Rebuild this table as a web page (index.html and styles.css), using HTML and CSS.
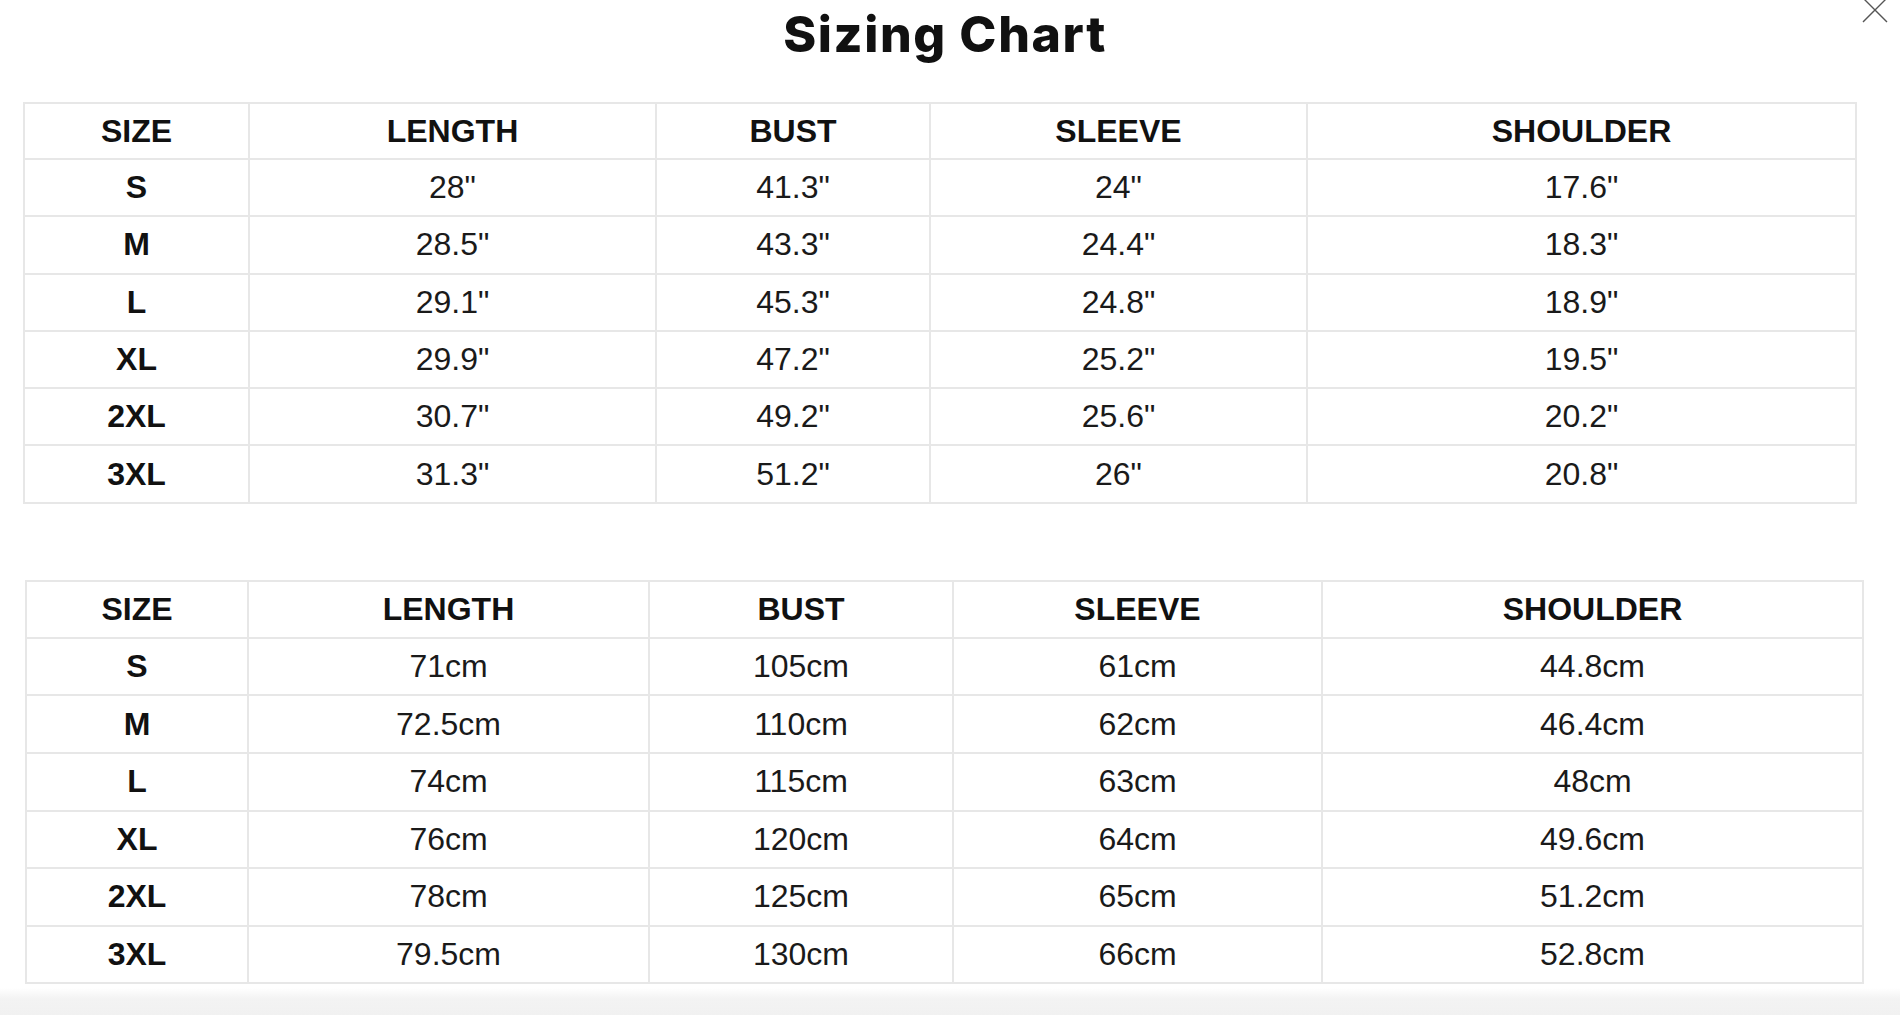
FILE: index.html
```html
<!DOCTYPE html>
<html lang="en">
<head>
<meta charset="utf-8">
<title>Sizing Chart</title>
<link rel="stylesheet" href="styles.css">
</head>
<body>
<div class="modal">
  <button class="close" aria-label="Close">
    <svg width="26" height="26" viewBox="0 0 26 26"><path d="M1 0 L25 24 M25 0 L1 24" stroke="#555" stroke-width="1.4" fill="none"/></svg>
  </button>
  <h1 class="title">Sizing Chart</h1>

  <table class="chart chart-in">
    <colgroup>
      <col class="c1"><col class="c2"><col class="c3"><col class="c4"><col class="c5">
    </colgroup>
    <thead>
      <tr><th>SIZE</th><th>LENGTH</th><th>BUST</th><th>SLEEVE</th><th>SHOULDER</th></tr>
    </thead>
    <tbody>
      <tr><th>S</th><td>28"</td><td>41.3"</td><td>24"</td><td>17.6"</td></tr>
      <tr><th>M</th><td>28.5"</td><td>43.3"</td><td>24.4"</td><td>18.3"</td></tr>
      <tr><th>L</th><td>29.1"</td><td>45.3"</td><td>24.8"</td><td>18.9"</td></tr>
      <tr><th>XL</th><td>29.9"</td><td>47.2"</td><td>25.2"</td><td>19.5"</td></tr>
      <tr><th>2XL</th><td>30.7"</td><td>49.2"</td><td>25.6"</td><td>20.2"</td></tr>
      <tr><th>3XL</th><td>31.3"</td><td>51.2"</td><td>26"</td><td>20.8"</td></tr>
    </tbody>
  </table>

  <table class="chart chart-cm">
    <colgroup>
      <col class="c1"><col class="c2"><col class="c3"><col class="c4"><col class="c5">
    </colgroup>
    <thead>
      <tr><th>SIZE</th><th>LENGTH</th><th>BUST</th><th>SLEEVE</th><th>SHOULDER</th></tr>
    </thead>
    <tbody>
      <tr><th>S</th><td>71cm</td><td>105cm</td><td>61cm</td><td>44.8cm</td></tr>
      <tr><th>M</th><td>72.5cm</td><td>110cm</td><td>62cm</td><td>46.4cm</td></tr>
      <tr><th>L</th><td>74cm</td><td>115cm</td><td>63cm</td><td>48cm</td></tr>
      <tr><th>XL</th><td>76cm</td><td>120cm</td><td>64cm</td><td>49.6cm</td></tr>
      <tr><th>2XL</th><td>78cm</td><td>125cm</td><td>65cm</td><td>51.2cm</td></tr>
      <tr><th>3XL</th><td>79.5cm</td><td>130cm</td><td>66cm</td><td>52.8cm</td></tr>
    </tbody>
  </table>
</div>
<div class="backdrop"></div>
</body>
</html>
```

FILE: styles.css
```css
* { box-sizing: border-box; }

html, body {
  margin: 0;
  padding: 0;
  background: #ffffff;
}

body {
  width: 1900px;
  height: 1015px;
  overflow: hidden;
  font-family: "Liberation Sans", Arial, sans-serif;
  color: #111111;
  display: flex;
  flex-direction: column;
}

.modal {
  position: relative;
  display: flex;
  flex-direction: column;
}

.close {
  position: absolute;
  top: -2px;
  right: 12px;
  width: 26px;
  height: 26px;
  padding: 0;
  border: 0;
  background: transparent;
}

.close svg { display: block; }

.title {
  margin: 0;
  height: 102px;
  padding-top: 6px;
  padding-right: 10px;
  text-align: center;
  font-family: "Inter", "Open Sans", sans-serif;
  font-weight: 800;
  font-size: 50px;
  line-height: 56px;
  letter-spacing: 1.6px;
  color: #111111;
}

.chart {
  border-collapse: collapse;
  table-layout: fixed;
  border: 2px solid #e4e4e4;
}

.chart th,
.chart td {
  border: 2px solid #e7e7e7;
  text-align: center;
  vertical-align: middle;
  padding: 0;
  font-size: 32px;
  color: #111111;
}

.chart th {
  font-weight: 700;
}

.chart td {
  font-weight: 400;
  color: #1a1a1a;
}

.chart-in {
  margin-left: 23px;
  width: 1832px;
}

.chart-in th,
.chart-in td { height: 57.3px; }

.chart-in thead th { height: 56px; }

.chart-in .c1 { width: 225px; }
.chart-in .c2 { width: 407px; }
.chart-in .c3 { width: 274px; }
.chart-in .c4 { width: 377px; }
.chart-in .c5 { width: 549px; }

.chart-cm {
  margin-top: 76px;
  margin-left: 25px;
  width: 1837px;
}

.chart-cm th,
.chart-cm td { height: 57.6px; }

.chart-cm thead th { height: 57px; }

.chart-cm .c1 { width: 222px; }
.chart-cm .c2 { width: 401px; }
.chart-cm .c3 { width: 304px; }
.chart-cm .c4 { width: 369px; }
.chart-cm .c5 { width: 541px; }

.backdrop {
  flex: 1;
  margin-top: 4px;
  background: linear-gradient(to bottom, #ffffff 0%, #f3f3f3 40%, #f1f1f1 100%);
}
```
